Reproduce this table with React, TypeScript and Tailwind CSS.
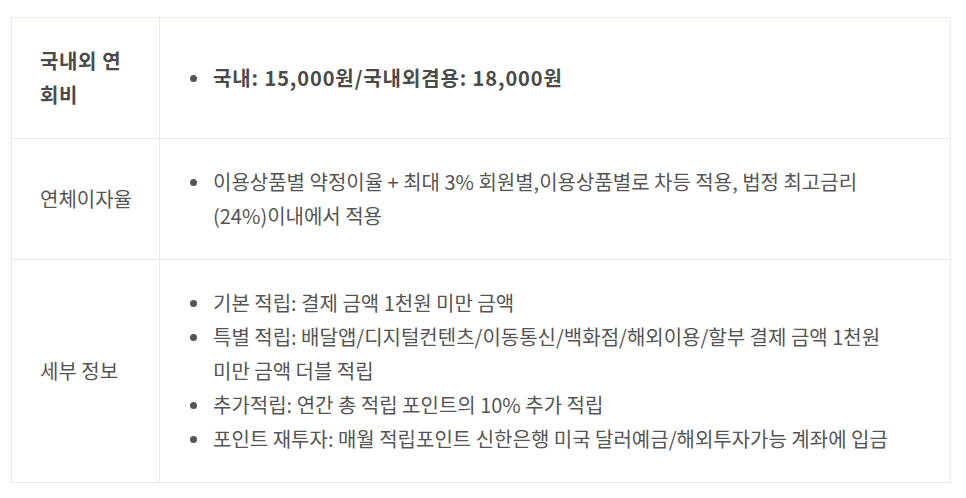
import React from 'react';

type Row = {
  label: string;
  bold?: boolean;
  items: string[];
};

const rows: Row[] = [
  {
    label: '국내외 연회비',
    bold: true,
    items: ['국내: 15,000원/국내외겸용: 18,000원'],
  },
  {
    label: '연체이자율',
    items: [
      '이용상품별 약정이율 + 최대 3% 회원별,이용상품별로 차등 적용, 법정 최고금리 (24%)이내에서 적용',
    ],
  },
  {
    label: '세부 정보',
    items: [
      '기본 적립: 결제 금액 1천원 미만 금액',
      '특별 적립: 배달앱/디지털컨텐츠/이동통신/백화점/해외이용/할부 결제 금액 1천원 미만 금액 더블 적립',
      '추가적립: 연간 총 적립 포인트의 10% 추가 적립',
      '포인트 재투자: 매월 적립포인트 신한은행 미국 달러예금/해외투자가능 계좌에 입금',
    ],
  },
];

export default function App() {
  return (
    <div
      className="min-h-[498px] bg-white pt-[17px] pl-[11px] text-[20px] leading-[34px] text-[#555]"
      style={{ fontFamily: '"Noto Sans CJK KR", "Noto Sans", sans-serif' }}
    >
      <div className="w-[940px] border border-[#ece9e1]">
        {rows.map((row, i) => (
          <div
            key={row.label}
            className={`flex ${i > 0 ? 'border-t border-[#ece9e1]' : ''}`}
          >
            <div
              className={`flex w-[148px] shrink-0 items-center border-r border-[#ece9e1] py-[26px] pl-[28px] pr-[26px] ${
                row.bold ? 'font-bold tracking-[0.6px] text-[#4a4a4a]' : ''
              }`}
            >
              {row.label}
            </div>
            <div
              className={`flex flex-1 flex-col justify-center py-[26px] pl-[30px] pr-[40px] break-keep ${
                row.bold ? 'font-bold tracking-[0.9px] text-[#4a4a4a]' : ''
              }`}
            >
              {row.items.map((item) => (
                <div key={item} className="flex">
                  <span className="flex h-[34px] w-[23px] shrink-0 items-center">
                    <span className="h-[7px] w-[7px] rounded-full bg-[#555]" />
                  </span>
                  <span>{item}</span>
                </div>
              ))}
            </div>
          </div>
        ))}
      </div>
    </div>
  );
}
